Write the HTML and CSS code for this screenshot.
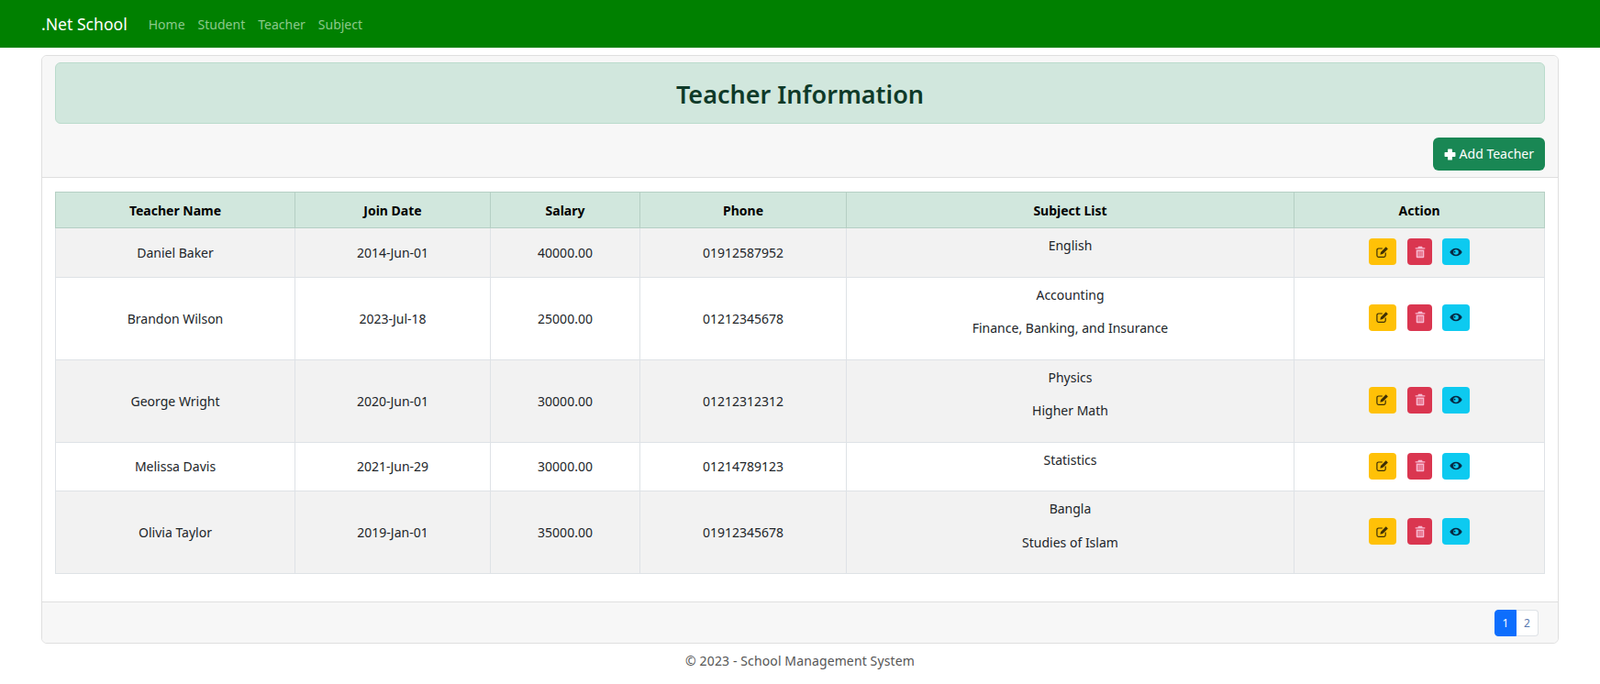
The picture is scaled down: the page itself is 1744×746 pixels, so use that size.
FILE: index.html
```html
<!DOCTYPE html>
<html lang="en">
<head>
  <meta charset="UTF-8">
  <meta name="viewport" content="width=device-width, initial-scale=1.0">
  <link rel="stylesheet" href="styles.css">
  <title>Teacher Information - School Management System</title>
</head>
<body>
  <svg class="sprites" width="0" height="0" aria-hidden="true">
    <symbol id="i-plus" viewBox="0 0 14 14">
      <path d="M5 0.6h4a.6.6 0 0 1 .6.6v3.2h3.2a.6.6 0 0 1 .6.6v4a.6.6 0 0 1-.6.6H9.6v3.2a.6.6 0 0 1-.6.6H5a.6.6 0 0 1-.6-.6V9.6H1.2a.6.6 0 0 1-.6-.6V5a.6.6 0 0 1 .6-.6h3.2V1.2A.6.6 0 0 1 5 .6z" fill="currentColor"/>
    </symbol>
    <symbol id="i-edit" viewBox="0 0 14 14">
      <path d="M10.2 7.6v3a1.7 1.7 0 0 1-1.7 1.7H2.6A1.7 1.7 0 0 1 .9 10.6V4.7A1.7 1.7 0 0 1 2.6 3h4.2" fill="none" stroke="currentColor" stroke-width="1.2"/>
      <path d="M10.7 1.2l2.2 2.2-5.7 5.7-2.8.6.6-2.8z" fill="currentColor"/>
    </symbol>
    <symbol id="i-trash" viewBox="0 0 14 14">
      <path d="M5 .8h4l.7 1.5h2.6v1.3H1.7V2.3h2.6zM2.7 4.5h8.6v7.7a1.1 1.1 0 0 1-1.1 1.1H3.8a1.1 1.1 0 0 1-1.1-1.1zM4.6 6v5.8h.9V6zm2 0v5.8h.9V6zm2 0v5.8h.9V6z" fill="currentColor" fill-rule="evenodd"/>
    </symbol>
    <symbol id="i-eye" viewBox="0 0 14 14">
      <path d="M7 2.8c3 0 5.4 1.8 6.7 4.2C12.4 9.4 10 11.2 7 11.2S1.6 9.4.3 7C1.6 4.6 4 2.8 7 2.8zm0 1.4a2.8 2.8 0 1 0 0 5.6 2.8 2.8 0 0 0 0-5.6zM5.6 5.8a.9.9 0 1 1 0 1.8.9.9 0 0 1 0-1.8z" fill="currentColor" fill-rule="evenodd"/>
    </symbol>
  </svg>

  <nav class="navbar">
    <a class="brand" href="#">.Net School</a>
    <ul class="nav-links">
      <li><a href="#">Home</a></li>
      <li><a href="#">Student</a></li>
      <li><a href="#">Teacher</a></li>
      <li><a href="#">Subject</a></li>
    </ul>
  </nav>

  <main class="container">
    <section class="card">
      <header class="card-header">
        <h1 class="alert-title">Teacher Information</h1>
        <div class="header-actions">
          <a class="btn btn-add" href="#"><svg class="icon"><use href="#i-plus"/></svg> Add Teacher</a>
        </div>
      </header>

      <div class="card-body">
        <table class="teacher-table">
          <colgroup>
            <col class="col-name">
            <col class="col-date">
            <col class="col-salary">
            <col class="col-phone">
            <col class="col-subject">
            <col class="col-action">
          </colgroup>
          <thead>
            <tr>
              <th>Teacher Name</th>
              <th>Join Date</th>
              <th>Salary</th>
              <th>Phone</th>
              <th>Subject List</th>
              <th>Action</th>
            </tr>
          </thead>
          <tbody>
            <tr>
              <td>Daniel Baker</td>
              <td>2014-Jun-01</td>
              <td>40000.00</td>
              <td>01912587952</td>
              <td><p>English</p></td>
              <td class="actions">
                <a class="act act-edit" href="#"><svg class="icon"><use href="#i-edit"/></svg></a>
                <a class="act act-delete" href="#"><svg class="icon"><use href="#i-trash"/></svg></a>
                <a class="act act-view" href="#"><svg class="icon"><use href="#i-eye"/></svg></a>
              </td>
            </tr>
            <tr>
              <td>Brandon Wilson</td>
              <td>2023-Jul-18</td>
              <td>25000.00</td>
              <td>01212345678</td>
              <td><p>Accounting</p><p>Finance, Banking, and Insurance</p></td>
              <td class="actions">
                <a class="act act-edit" href="#"><svg class="icon"><use href="#i-edit"/></svg></a>
                <a class="act act-delete" href="#"><svg class="icon"><use href="#i-trash"/></svg></a>
                <a class="act act-view" href="#"><svg class="icon"><use href="#i-eye"/></svg></a>
              </td>
            </tr>
            <tr>
              <td>George Wright</td>
              <td>2020-Jun-01</td>
              <td>30000.00</td>
              <td>01212312312</td>
              <td><p>Physics</p><p>Higher Math</p></td>
              <td class="actions">
                <a class="act act-edit" href="#"><svg class="icon"><use href="#i-edit"/></svg></a>
                <a class="act act-delete" href="#"><svg class="icon"><use href="#i-trash"/></svg></a>
                <a class="act act-view" href="#"><svg class="icon"><use href="#i-eye"/></svg></a>
              </td>
            </tr>
            <tr>
              <td>Melissa Davis</td>
              <td>2021-Jun-29</td>
              <td>30000.00</td>
              <td>01214789123</td>
              <td><p>Statistics</p></td>
              <td class="actions">
                <a class="act act-edit" href="#"><svg class="icon"><use href="#i-edit"/></svg></a>
                <a class="act act-delete" href="#"><svg class="icon"><use href="#i-trash"/></svg></a>
                <a class="act act-view" href="#"><svg class="icon"><use href="#i-eye"/></svg></a>
              </td>
            </tr>
            <tr>
              <td>Olivia Taylor</td>
              <td>2019-Jan-01</td>
              <td>35000.00</td>
              <td>01912345678</td>
              <td><p>Bangla</p><p>Studies of Islam</p></td>
              <td class="actions">
                <a class="act act-edit" href="#"><svg class="icon"><use href="#i-edit"/></svg></a>
                <a class="act act-delete" href="#"><svg class="icon"><use href="#i-trash"/></svg></a>
                <a class="act act-view" href="#"><svg class="icon"><use href="#i-eye"/></svg></a>
              </td>
            </tr>
          </tbody>
        </table>
      </div>

      <footer class="card-footer">
        <ul class="pagination">
          <li><a class="page active" href="#">1</a></li>
          <li><a class="page" href="#">2</a></li>
        </ul>
      </footer>
    </section>
  </main>

  <footer class="site-footer">&copy; 2023 - School Management System</footer>
</body>
</html>
```

FILE: styles.css
```css
*, *::before, *::after {
  box-sizing: border-box;
}

body {
  margin: 0;
  font-family: "Noto Sans", "Open Sans", sans-serif;
  font-size: 14px;
  line-height: 21px;
  color: #212529;
  background: #fff;
}

a {
  text-decoration: none;
}

.sprites {
  position: absolute;
}

.icon {
  width: 13px;
  height: 13px;
  vertical-align: -2px;
}

/* navbar */
.navbar {
  display: flex;
  align-items: center;
  height: 52px;
  padding: 0 45px;
  background: #008000;
}

.brand {
  margin-right: 16px;
  font-size: 17.6px;
  color: #fff;
}

.nav-links {
  display: flex;
  margin: 0;
  padding: 0 7px;
  list-style: none;
  gap: 14px;
}

.nav-links a {
  color: #8cc98c;
}

/* card */
.container {
  padding: 8px 45px 0;
}

.card {
  border: 1px solid #dfdfdf;
  border-radius: 6px;
}

.card-header {
  padding: 7px 14px;
  background: #f7f7f7;
  border-bottom: 1px solid #dfdfdf;
  border-radius: 6px 6px 0 0;
}

.alert-title {
  margin: 0 0 15px;
  padding: 15px 14px 13px;
  font-size: 27px;
  line-height: 37px;
  font-weight: 600;
  text-align: center;
  color: #0f3a29;
  background: #d1e7dd;
  border: 1px solid #badbcc;
  border-radius: 6px;
}

.header-actions {
  display: flex;
  justify-content: flex-end;
}

.btn {
  display: inline-block;
  padding: 7px 12px 8px;
  font-size: 14px;
  line-height: 21px;
  border-radius: 6px;
}

.btn-add {
  color: #fff;
  background: #198754;
}

.card-body {
  padding: 15px 14px 30px;
}

/* table */
.teacher-table {
  width: 100%;
  table-layout: fixed;
  border-collapse: collapse;
  text-align: center;
}

.col-name { width: 261px; }
.col-date { width: 213px; }
.col-salary { width: 163px; }
.col-phone { width: 225px; }
.col-action { width: 273px; }

.teacher-table th,
.teacher-table td {
  padding: 8px;
  vertical-align: middle;
  border: 1px solid #dee2e6;
}

.teacher-table th {
  height: 39px;
  font-weight: 700;
  color: #000;
  background: #d1e7dd;
  border-color: #b5cfc4;
}

.teacher-table tbody tr:nth-child(odd) {
  background: #f2f2f2;
}

.teacher-table p {
  margin: 0 0 15.5px;
}

.teacher-table td.actions {
  padding-top: 10px;
  white-space: nowrap;
  font-size: 0;
}

.act {
  display: inline-flex;
  align-items: center;
  justify-content: center;
  height: 29px;
  margin: 0 6px;
  border-radius: 4px;
}

.act .icon {
  width: 14px;
  height: 14px;
  vertical-align: 0;
}

.act-edit {
  width: 30px;
  color: #3d2f05;
  background: #ffc107;
}

.act-delete {
  width: 27px;
  color: #f7b8d0;
  background: #da3650;
}

.act-view {
  width: 30px;
  margin-left: 5px;
  color: #062a44;
  background: #0dcaf0;
}

/* pagination */
.card-footer {
  display: flex;
  justify-content: flex-end;
  padding: 8px 21px 7px;
  background: #f7f7f7;
  border-top: 1px solid #dfdfdf;
  border-radius: 0 0 6px 6px;
}

.pagination {
  display: flex;
  margin: 0;
  padding: 0;
  list-style: none;
}

.page {
  display: block;
  width: 24px;
  height: 29px;
  font-size: 12px;
  line-height: 27px;
  text-align: center;
  color: #5a78b0;
  background: #fff;
  border: 1px solid #dee2e6;
  border-left: 0;
  border-radius: 0 4px 4px 0;
}

.page.active {
  color: #fff;
  background: #0d6efd;
  border: 1px solid #0d6efd;
  border-radius: 4px 0 0 4px;
}

.site-footer {
  padding-top: 8px;
  text-align: center;
  letter-spacing: .12px;
  color: #555;
}
```
